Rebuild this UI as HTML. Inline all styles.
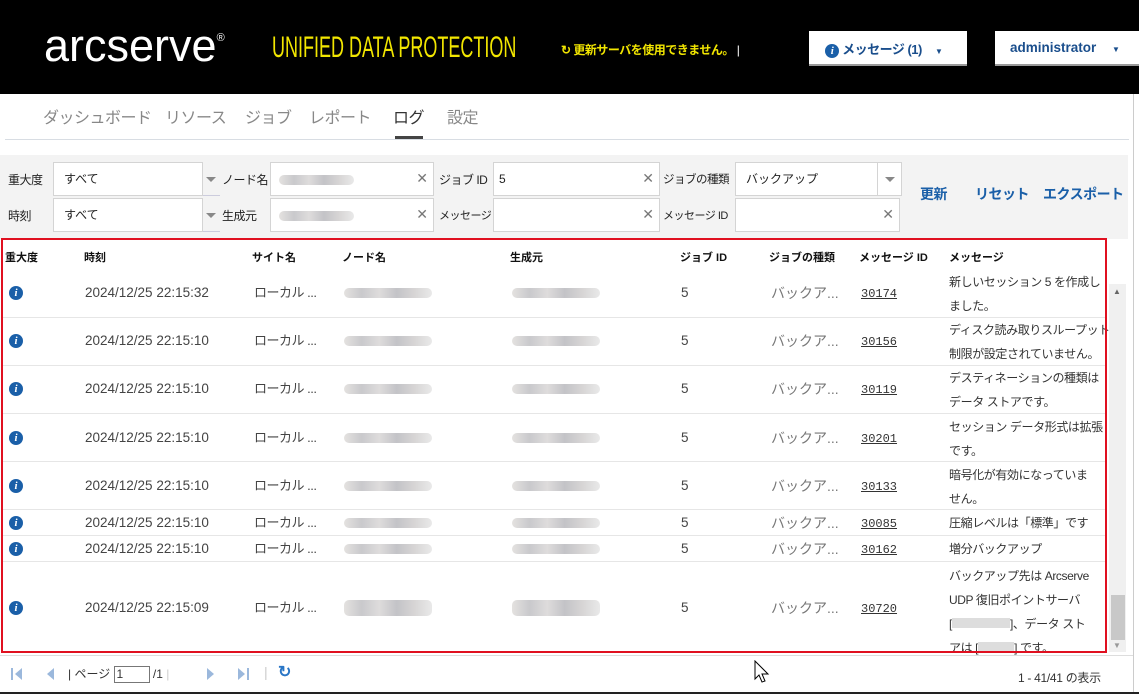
<!DOCTYPE html>
<html><head><meta charset="utf-8"><style>
*{margin:0;padding:0;box-sizing:border-box}
body{width:1139px;height:694px;overflow:hidden;background:#fff;font-family:"Liberation Sans","Noto Sans CJK JP",sans-serif;position:relative;color:#333}
.a{position:absolute;white-space:nowrap}
.hdr{left:0;top:0;width:1139px;height:94px;background:#000}
.inp{position:absolute;background:#fff;border:1px solid #d4d4d4;height:34px;font-size:12px;padding:9px 10px;color:#222;line-height:14px}
.x{position:absolute;right:5px;top:8px;color:#777;font-size:14px}
.dd{position:absolute;right:0;top:0;width:24px;height:32px;border-left:1px solid #d4d4d4}
.dd:after{content:"";position:absolute;left:7px;top:14px;border:5px solid transparent;border-top:5px solid #888}
.lbl{font-size:12px;color:#222;letter-spacing:-0.5px}
.th{font-size:11px;font-weight:bold;color:#111;top:249px}
.row{position:absolute;left:3px;width:1103px;border-bottom:1px solid #e6e6e6}
.c{position:absolute;font-size:13.5px;color:#444;white-space:nowrap;line-height:16px}
.j{position:absolute;font-size:13px;color:#444;white-space:nowrap;line-height:16px;letter-spacing:-0.5px}
.k{position:absolute;font-size:14px;color:#777;white-space:nowrap;line-height:16px}
.i{position:absolute;left:6px;width:14px;height:14px;border-radius:50%;background:#1a5fa8;color:#fff;font:italic bold 11px "Liberation Serif",serif;text-align:center;line-height:14px}
.bl{position:absolute;height:10px;background:linear-gradient(90deg,#e4e2e0,#c9c9cc 20%,#dedcdc 40%,#c3c3c7 60%,#d7d5d5 80%,#e9e9e9);border-radius:5px}
.mid{position:absolute;font-size:12px;color:#333;text-decoration:underline;font-family:"Liberation Mono",monospace;line-height:16px}
.msg{position:absolute;left:949px;font-size:12px;color:#333;line-height:24px;white-space:nowrap;letter-spacing:-0.4px}
.nav{position:absolute;top:104px;font-size:16px;color:#888;letter-spacing:-0.5px}
.btn{position:absolute;top:184px;font-size:14px;font-weight:bold;color:#1a5fa8;letter-spacing:-0.5px}
</style></head><body>
<div class="a hdr"></div>
<div class="a" style="left:44px;top:20px;font-size:45px;color:#fff;font-family:'Liberation Sans',sans-serif">arcserve<span style="font-size:11px;vertical-align:top;position:relative;top:12px">®</span></div>
<div class="a" style="left:272px;top:31px;font-size:30px;color:#f2e600;transform:scaleX(0.6);transform-origin:left;font-family:'Liberation Sans',sans-serif;width:360px">UNIFIED DATA PROTECTION</div>
<div class="a" style="left:561px;top:41px;font-size:12px;color:#f2e600;font-weight:bold;letter-spacing:-0.5px">↻ 更新サーバを使用できません。 <span style="color:#fff;font-weight:normal">|</span></div>
<div class="a" style="left:809px;top:31px;width:158px;height:35px;background:#fff;border-bottom:2px solid #999;font-size:13px;color:#1a4e8c;font-weight:bold;padding:8px 16px;letter-spacing:-0.5px"><span style="display:inline-block;width:14px;height:14px;border-radius:50%;background:#1a5fa8;color:#fff;font:italic bold 11px serif;text-align:center;line-height:14px">i</span> メッセージ (1) <span style="font-size:8px;margin-left:10px">▼</span></div>
<div class="a" style="left:995px;top:31px;width:144px;height:35px;background:#fff;border-bottom:2px solid #999;font-size:13.5px;color:#1a4e8c;font-weight:bold;padding:9px 15px">administrator <span style="font-size:8px;margin-left:12px">▼</span></div>
<div class="a" style="left:1133px;top:94px;width:6px;height:600px;background:#fff;border-left:1px solid #ccc"></div>
<div class="nav" style="left:43px">ダッシュボード</div>
<div class="nav" style="left:165px">リソース</div>
<div class="nav" style="left:245px">ジョブ</div>
<div class="nav" style="left:309px">レポート</div>
<div class="nav" style="left:393px;color:#333">ログ</div>
<div class="nav" style="left:447px">設定</div>
<div class="a" style="left:395px;top:136px;width:28px;height:3px;background:#444"></div>
<div class="a" style="left:5px;top:139px;width:1124px;height:1px;background:#d8dde3"></div>
<div class="a" style="left:0;top:155px;width:1128px;height:84px;background:#f3f3f3"></div>
<div class="a lbl" style="left:8px;top:171px">重大度</div>
<div class="a lbl" style="left:8px;top:207px">時刻</div>
<div class="inp" style="left:53px;top:162px;width:150px">すべて</div><div class="a" style="left:203px;top:162px;width:17px;height:34px;border-bottom:1px solid #ccd"><div style="position:absolute;left:3px;top:15px;border:5px solid transparent;border-top:5px solid #888"></div></div>
<div class="inp" style="left:53px;top:198px;width:150px">すべて</div><div class="a" style="left:203px;top:198px;width:17px;height:34px;border-bottom:1px solid #ccd"><div style="position:absolute;left:3px;top:15px;border:5px solid transparent;border-top:5px solid #888"></div></div>
<div class="a lbl" style="left:222px;top:171px">ノード名</div>
<div class="a lbl" style="left:222px;top:207px">生成元</div>
<div class="inp" style="left:270px;top:162px;width:164px"><div class="bl" style="left:8px;top:12px;width:75px"></div><span class="x">✕</span></div>
<div class="inp" style="left:270px;top:198px;width:164px"><div class="bl" style="left:8px;top:12px;width:75px"></div><span class="x">✕</span></div>
<div class="a lbl" style="left:439px;top:171px">ジョブ ID</div>
<div class="a lbl" style="left:439px;top:207px;font-size:11px">メッセージ</div>
<div class="inp" style="left:493px;top:162px;width:167px;padding-left:5px">5<span class="x">✕</span></div>
<div class="inp" style="left:493px;top:198px;width:167px"><span class="x">✕</span></div>
<div class="a lbl" style="left:663px;top:171px;font-size:11.5px">ジョブの種類</div>
<div class="a lbl" style="left:663px;top:207px;font-size:11px">メッセージ ID</div>
<div class="inp" style="left:735px;top:162px;width:167px">バックアップ<div class="dd"></div></div>
<div class="inp" style="left:735px;top:198px;width:165px"><span class="x">✕</span></div>
<div class="btn" style="left:920px">更新</div>
<div class="btn" style="left:975px">リセット</div>
<div class="btn" style="left:1043px">エクスポート</div>

<div class="a" style="left:1px;top:238px;width:1106px;height:415px;border:2px solid #e01020;z-index:5"></div>
<div class="a" style="left:1109px;top:240px;width:17px;height:412px;background:#f0f0f0"></div>
<div class="a" style="left:1109px;top:240px;width:17px;height:44px;background:#fff"></div>
<div class="a" style="left:1113px;top:287px;font-size:8px;color:#666">▲</div>
<div class="a" style="left:1111px;top:595px;width:14px;height:45px;background:#c8c8c8"></div>
<div class="a" style="left:1113px;top:641px;font-size:8px;color:#999">▼</div>

<div class="a th" style="left:5px">重大度</div><div class="a th" style="left:84px">時刻</div><div class="a th" style="left:252px">サイト名</div><div class="a th" style="left:342px">ノード名</div><div class="a th" style="left:510px">生成元</div><div class="a th" style="left:680px">ジョブ ID</div><div class="a th" style="left:769px">ジョブの種類</div><div class="a th" style="left:859px">メッセージ ID</div><div class="a th" style="left:949px">メッセージ</div>

<div class="row" style="top:270px;height:48px"></div>
<div class="row" style="top:318px;height:48px"></div>
<div class="row" style="top:366px;height:48px"></div>
<div class="row" style="top:414px;height:48px"></div>
<div class="row" style="top:462px;height:48px"></div>
<div class="row" style="top:510px;height:26px"></div>
<div class="row" style="top:536px;height:26px"></div>

<div class="i" style="left:9px;top:286px">i</div><div class="c" style="left:85px;top:285px">2024/12/25 22:15:32</div><div class="j" style="left:254px;top:285px">ローカル ...</div><div class="bl" style="left:344px;top:288px;width:88px"></div><div class="bl" style="left:512px;top:288px;width:88px"></div><div class="c" style="left:681px;top:285px">5</div><div class="k" style="left:771px;top:285px">バックア...</div><div class="mid" style="left:861px;top:286px">30174</div><div class="msg" style="top:270px">新しいセッション 5 を作成し<br>ました。</div>

<div class="i" style="left:9px;top:334px">i</div><div class="c" style="left:85px;top:333px">2024/12/25 22:15:10</div><div class="j" style="left:254px;top:333px">ローカル ...</div><div class="bl" style="left:344px;top:336px;width:88px"></div><div class="bl" style="left:512px;top:336px;width:88px"></div><div class="c" style="left:681px;top:333px">5</div><div class="k" style="left:771px;top:333px">バックア...</div><div class="mid" style="left:861px;top:334px">30156</div><div class="msg" style="top:318px">ディスク読み取りスループット<br>制限が設定されていません。</div>

<div class="i" style="left:9px;top:382px">i</div><div class="c" style="left:85px;top:381px">2024/12/25 22:15:10</div><div class="j" style="left:254px;top:381px">ローカル ...</div><div class="bl" style="left:344px;top:384px;width:88px"></div><div class="bl" style="left:512px;top:384px;width:88px"></div><div class="c" style="left:681px;top:381px">5</div><div class="k" style="left:771px;top:381px">バックア...</div><div class="mid" style="left:861px;top:382px">30119</div><div class="msg" style="top:366px">デスティネーションの種類は<br>データ ストアです。</div>

<div class="i" style="left:9px;top:431px">i</div><div class="c" style="left:85px;top:430px">2024/12/25 22:15:10</div><div class="j" style="left:254px;top:430px">ローカル ...</div><div class="bl" style="left:344px;top:433px;width:88px"></div><div class="bl" style="left:512px;top:433px;width:88px"></div><div class="c" style="left:681px;top:430px">5</div><div class="k" style="left:771px;top:430px">バックア...</div><div class="mid" style="left:861px;top:431px">30201</div><div class="msg" style="top:415px">セッション データ形式は拡張<br>です。</div>

<div class="i" style="left:9px;top:479px">i</div><div class="c" style="left:85px;top:478px">2024/12/25 22:15:10</div><div class="j" style="left:254px;top:478px">ローカル ...</div><div class="bl" style="left:344px;top:481px;width:88px"></div><div class="bl" style="left:512px;top:481px;width:88px"></div><div class="c" style="left:681px;top:478px">5</div><div class="k" style="left:771px;top:478px">バックア...</div><div class="mid" style="left:861px;top:479px">30133</div><div class="msg" style="top:463px">暗号化が有効になっていま<br>せん。</div>

<div class="i" style="left:9px;top:516px">i</div><div class="c" style="left:85px;top:515px">2024/12/25 22:15:10</div><div class="j" style="left:254px;top:515px">ローカル ...</div><div class="bl" style="left:344px;top:518px;width:88px"></div><div class="bl" style="left:512px;top:518px;width:88px"></div><div class="c" style="left:681px;top:515px">5</div><div class="k" style="left:771px;top:515px">バックア...</div><div class="mid" style="left:861px;top:516px">30085</div><div class="msg" style="top:511px">圧縮レベルは「標準」です</div>

<div class="i" style="left:9px;top:542px">i</div><div class="c" style="left:85px;top:541px">2024/12/25 22:15:10</div><div class="j" style="left:254px;top:541px">ローカル ...</div><div class="bl" style="left:344px;top:544px;width:88px"></div><div class="bl" style="left:512px;top:544px;width:88px"></div><div class="c" style="left:681px;top:541px">5</div><div class="k" style="left:771px;top:541px">バックア...</div><div class="mid" style="left:861px;top:542px">30162</div><div class="msg" style="top:537px">増分バックアップ</div>

<div class="i" style="left:9px;top:601px">i</div><div class="c" style="left:85px;top:600px">2024/12/25 22:15:09</div><div class="j" style="left:254px;top:600px">ローカル ...</div><div class="bl" style="left:344px;top:600px;width:88px;height:16px"></div><div class="bl" style="left:512px;top:600px;width:88px;height:16px"></div><div class="c" style="left:681px;top:600px">5</div><div class="k" style="left:771px;top:600px">バックア...</div><div class="mid" style="left:861px;top:601px">30720</div><div class="msg" style="top:564px">バックアップ先は Arcserve<br>UDP 復旧ポイントサーバ<br>[<span style="display:inline-block;width:58px;height:10px;background:#ddd"></span>]、データ スト<br>アは [<span style="display:inline-block;width:36px;height:10px;background:#ddd"></span>] です。</div>

<div class="a" style="left:0;top:655px;width:1133px;height:1px;background:#ddd"></div>
<svg class="a" style="left:10px;top:667px" width="60" height="14"><g fill="#9bb8dc"><rect x="1" y="1" width="2" height="12"/><path d="M12 1L5 7l7 6z"/><path d="M44 1l-7 6 7 6z"/></g></svg>
<div class="a" style="left:68px;top:666px;font-size:12px;color:#333;line-height:16px">| ページ <span style="display:inline-block;width:36px;height:17px;border:1px solid #777;vertical-align:middle;padding-left:2px;line-height:15px">1</span> /1 <span style="color:#ccc">|</span></div>
<svg class="a" style="left:205px;top:667px" width="50" height="14"><g fill="#9bb8dc"><path d="M2 1l7 6-7 6z"/><path d="M33 1l7 6-7 6z"/><rect x="42" y="1" width="2" height="12"/></g></svg>
<div class="a" style="left:264px;top:664px;font-size:14px;color:#ccc">|</div>
<div class="a" style="left:278px;top:662px;font-size:16px;color:#2a76c6;font-weight:bold">↻</div>
<div class="a" style="left:1018px;top:669px;font-size:12px;color:#333;letter-spacing:-0.3px">1 - 41/41 の表示</div>
<div class="a" style="left:0;top:692px;width:1139px;height:2px;background:#222"></div>
<svg class="a" style="left:754px;top:660px" width="16" height="24"><path d="M1 1v18l4-4 3 7 3-1-3-7h6z" fill="#fff" stroke="#000" stroke-width="1"/></svg>
</body></html>
